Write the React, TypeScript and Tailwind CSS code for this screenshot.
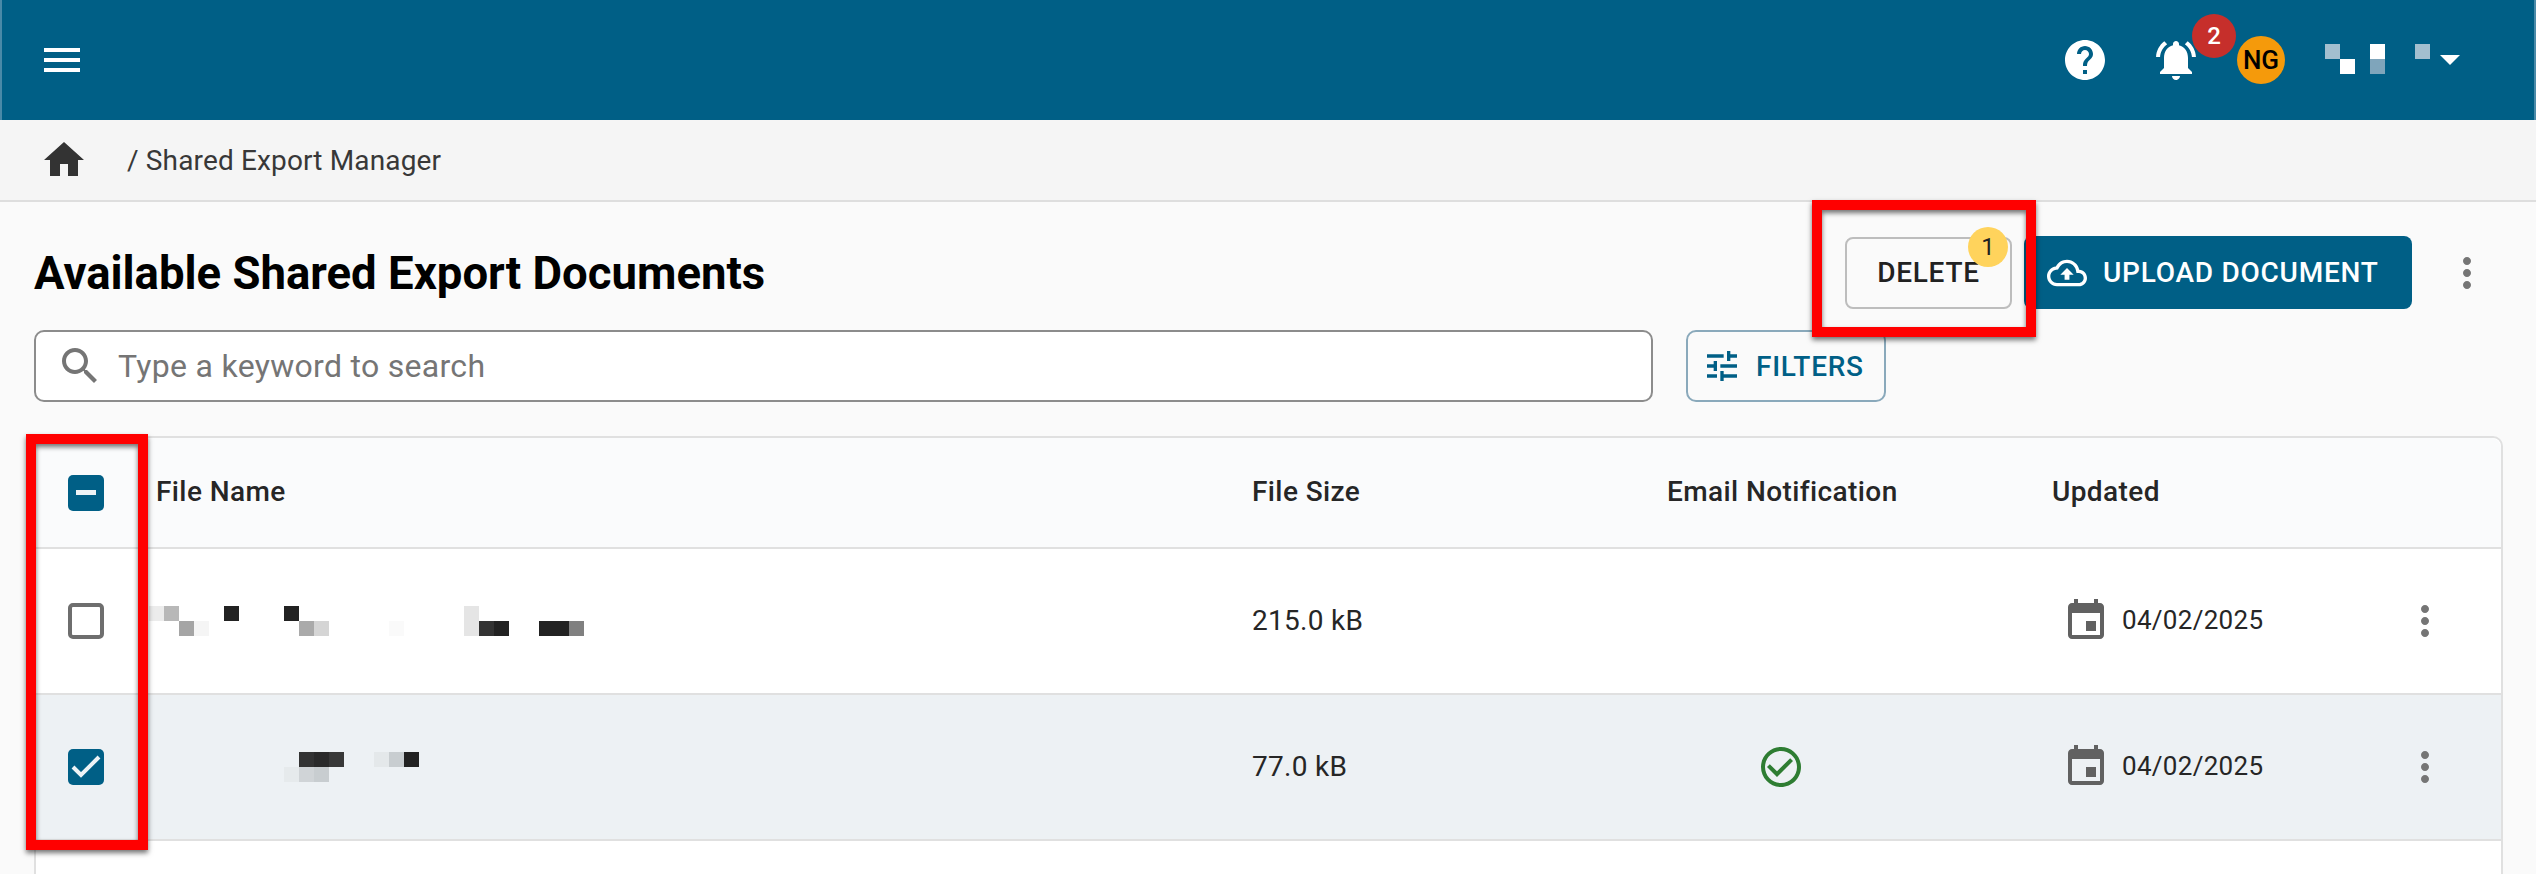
const FONT = "font-['Roboto',sans-serif]"

const MaterialIcon = ({ d, className }: { d: string; className?: string }) => (
  <svg viewBox="0 0 24 24" fill="currentColor" className={className}>
    <path d={d} />
  </svg>
)

const MENU = 'M3 18h18v-2H3v2zm0-5h18v-2H3v2zm0-7v2h18V6H3z'
const HOME = 'M10 20v-6h4v6h5v-8h3L12 3 2 12h3v8z'
const HELP = 'M12 2C6.48 2 2 6.48 2 12s4.48 10 10 10 10-4.48 10-10S17.52 2 12 2zm1 17h-2v-2h2v2zm2.07-7.75-.9.92C13.45 12.9 13 13.5 13 15h-2v-.5c0-1.1.45-2.1 1.17-2.83l1.24-1.26c.37-.36.59-.86.59-1.41 0-1.1-.9-2-2-2s-2 .9-2 2H8c0-2.21 1.79-4 4-4s4 1.79 4 4c0 .88-.36 1.68-.93 2.25z'
const BELL = 'M7.58 4.08 6.15 2.65C3.75 4.48 2.17 7.3 2.03 10.5h2c.15-2.65 1.51-4.97 3.55-6.42zm12.39 6.42h2c-.15-3.2-1.73-6.02-4.12-7.85l-1.42 1.43c2.02 1.45 3.39 3.77 3.54 6.42zM18 11c0-3.07-1.64-5.64-4.5-6.32V4c0-.83-.67-1.5-1.5-1.5s-1.5.67-1.5 1.5v.68C7.63 5.36 6 7.92 6 11v5l-2 2v1h16v-1l-2-2v-5zm-6 11c.14 0 .27-.01.4-.04.65-.14 1.18-.58 1.44-1.18.1-.24.15-.5.15-.78h-4c.01 1.1.9 2 2.01 2z'
const KEBAB = 'M12 8c1.1 0 2-.9 2-2s-.9-2-2-2-2 .9-2 2 .9 2 2 2zm0 2c-1.1 0-2 .9-2 2s.9 2 2 2 2-.9 2-2-.9-2-2-2zm0 6c-1.1 0-2 .9-2 2s.9 2 2 2 2-.9 2-2-.9-2-2-2z'
const CLOUD = 'M19.35 10.04C18.67 6.59 15.64 4 12 4 9.11 4 6.6 5.64 5.35 8.04 2.34 8.36 0 10.91 0 14c0 3.31 2.69 6 6 6h13c2.76 0 5-2.24 5-5 0-2.64-2.05-4.78-4.65-4.96zM19 18H6c-2.21 0-4-1.79-4-4 0-2.05 1.53-3.76 3.56-3.97l1.07-.11.5-.95C8.08 7.14 9.94 6 12 6c2.62 0 4.88 1.86 5.39 4.43l.3 1.5 1.53.11c1.56.1 2.78 1.41 2.78 2.96 0 1.65-1.35 3-3 3zM8 13h2.55v3h2.9v-3H16l-4-4z'
const SEARCH = 'M15.5 14h-.79l-.28-.27C15.41 12.59 16 11.11 16 9.5 16 5.91 13.09 3 9.5 3S3 5.91 3 9.5 5.91 16 9.5 16c1.61 0 3.09-.59 4.23-1.57l.27.28v.79l5 4.99L20.49 19l-4.99-5zm-6 0C7.01 14 5 11.99 5 9.5S7.01 5 9.5 5 14 7.01 14 9.5 11.99 14 9.5 14z'
const TUNE = 'M3 17v2h6v-2H3zM3 5v2h10V5H3zm10 16v-2h8v-2h-8v-2h-2v6h2zM7 9v2H3v2h4v2h2V9H7zm14 4v-2H11v2h10zm-6-4h2V7h4V5h-4V3h-2v6z'
const EVENT = 'M17 12h-5v5h5v-5zM16 1v2H8V1H6v2H5c-1.11 0-1.99.9-1.99 2L3 19c0 1.1.89 2 2 2h14c1.1 0 2-.9 2-2V5c0-1.1-.9-2-2-2h-1V1h-2zm3 18H5V8h14v11z'
const CHECK_CIRCLE = 'M16.59 7.58 10 14.17l-3.59-3.58L5 12l5 5 8-8zM12 2C6.48 2 2 6.48 2 12s4.48 10 10 10 10-4.48 10-10S17.52 2 12 2zm0 18c-4.42 0-8-3.58-8-8s3.58-8 8-8 8 3.58 8 8-3.58 8-8 8z'

type Cell = [number, number, string]

// redacted text in the screenshot: 15px mosaic blocks
const Mosaic = ({ cells, cols }: { cells: Cell[]; cols: number }) => (
  <svg width={cols * 15} height={30} className="block">
    {cells.map(([col, row, fill]) => (
      <rect key={`${col}-${row}`} x={col * 15} y={row * 15} width={15} height={15} fill={fill} />
    ))}
  </svg>
)

const ROW_ONE: Cell[] = [
  [0, 0, '#ececec'], [1, 0, '#b8b8b8'], [5, 0, '#222222'], [9, 0, '#222222'], [21, 0, '#e5e5e5'],
  [2, 1, '#a5a5a5'], [3, 1, '#f5f5f5'], [10, 1, '#aaaaaa'], [11, 1, '#d5d5d5'], [16, 1, '#fafafa'],
  [21, 1, '#e5e5e5'], [22, 1, '#333333'], [23, 1, '#222222'], [26, 1, '#222222'], [27, 1, '#222222'], [28, 1, '#808080'],
]

const ROW_TWO: Cell[] = [
  [10, 0, '#333333'], [11, 0, '#2a2a2a'], [12, 0, '#383838'], [15, 0, '#e4e8ea'], [16, 0, '#c8cdd0'], [17, 0, '#222222'],
  [9, 1, '#e6eaec'], [10, 1, '#d0d4d7'], [11, 1, '#c8cdd0'],
]

const USER_NAME: Cell[] = [
  [0, 0, '#a3bfcf'], [3, 0, '#ffffff'], [6, 0, '#a3bfcf'],
  [1, 1, '#ffffff'], [3, 1, '#7fa5bb'],
]

const Checkbox = ({ state }: { state: 'none' | 'some' | 'all' }) => {
  if (state === 'none') {
    return <div className="h-9 w-9 rounded-[5px] border-[4px] border-[#6e6e6e] bg-white" />
  }
  return (
    <svg width={36} height={36} className="block">
      <rect width={36} height={36} rx={5} fill="#005f86" />
      {state === 'some' && <rect x={8} y={15} width={20} height={5} fill="#edf3f6" />}
      {state === 'all' && <path d="M5 18l8 8L31 8" fill="none" stroke="#edf3f6" strokeWidth={4} />}
    </svg>
  )
}

const Row = ({ state, size, cells, notified, className }: {
  state: 'none' | 'all'
  size: string
  cells: Cell[]
  notified?: boolean
  className: string
}) => (
  <div className={`grid h-[146px] grid-cols-[113px_1103px_415px_227px_158px_1fr] items-center border-b-2 border-[#e0e0e0] text-[28px] tracking-[0.3px] text-[#262626] ${className}`}>
    <div className="pl-[32px]"><Checkbox state={state} /></div>
    <Mosaic cells={cells} cols={29} />
    <div>{size}</div>
    <div className="flex justify-center">
      {notified && <MaterialIcon d={CHECK_CIRCLE} className="h-12 w-12 text-[#2e7d32]" />}
    </div>
    <div />
    <div className="flex items-center justify-between pr-[52px]">
      <div className="flex items-center gap-3">
        <MaterialIcon d={EVENT} className="ml-[10px] h-12 w-12 text-[#616161]" />
        <span className="mt-[-2px] text-[26px]">04/02/2025</span>
      </div>
      <MaterialIcon d={KEBAB} className="h-12 w-12 text-[#757575]" />
    </div>
  </div>
)

export default function App() {
  return (
    <div className={`${FONT} relative h-[874px] overflow-hidden bg-[#fafafa]`}>
      <header className="flex h-[120px] items-center justify-between border-x-2 border-[#4a8aa8] bg-[#005f86] pr-[74px] pl-[36px] text-white">
        <MaterialIcon d={MENU} className="h-12 w-12" />
        <div className="flex items-center">
          <MaterialIcon d={HELP} className="h-12 w-12" />
          <div className="relative ml-[43px]">
            <MaterialIcon d={BELL} className="h-12 w-12" />
            <span className="absolute top-[-22px] left-[40px] flex h-11 w-11 items-center justify-center rounded-full bg-[#c62f2b] text-[24px] font-medium">2</span>
          </div>
          <span className="ml-[37px] flex h-12 w-12 items-center justify-center rounded-full bg-[#f59a0b] text-[26px] font-medium text-black">NG</span>
          <div className="mt-[-2px] ml-[40px]"><Mosaic cells={USER_NAME} cols={7} /></div>
          <svg width={20} height={10} className="ml-[10px] block fill-white"><path d="M0 0h20L10 10z" /></svg>
        </div>
      </header>

      <nav className="flex h-[82px] items-center border-b-2 border-[#dedede] bg-[#f5f5f5] pl-[40px] text-[28px] tracking-[0.15px] text-[#383838]">
        <MaterialIcon d={HOME} className="h-12 w-12 text-[#333333]" />
        <span className="mt-[1px] ml-[39px]">/ Shared Export Manager</span>
      </nav>

      <main className="pt-[34px] pr-[35px] pl-[34px]">
        <div className="flex h-[73px] items-center justify-between">
          <h1 className="mt-[3px] text-[45.5px] font-bold text-black">Available Shared Export Documents</h1>
          <div className="flex items-center pr-[10px]">
            <button className="relative h-[72px] w-[167px] rounded-lg border-2 border-[#bdbdbd] text-[28px] font-medium tracking-[0.75px] text-[#212121]">
              DELETE
              <span className="absolute top-[-12px] right-[2px] flex h-10 w-10 items-center justify-center rounded-full bg-[#ffd35c] text-[24px] font-normal tracking-normal">1</span>
            </button>
            <button className="ml-3 flex h-[73px] w-[388px] items-center rounded-lg bg-[#005f86] pl-[23px] text-[28px] font-medium tracking-[0.75px] text-white">
              <MaterialIcon d={CLOUD} className="h-10 w-10" />
              <span className="ml-4">UPLOAD DOCUMENT</span>
            </button>
            <MaterialIcon d={KEBAB} className="ml-[31px] h-12 w-12 text-[#757575]" />
          </div>
        </div>

        <div className="mt-[21px] flex items-center">
          <div className="flex h-[72px] w-[1619px] items-center rounded-[10px] border-2 border-[#8c8c8c] bg-white pl-[20px] text-[32px] tracking-[0.3px] text-[#757575]">
            <MaterialIcon d={SEARCH} className="h-12 w-12" />
            <span className="ml-[14px]">Type a keyword to search</span>
          </div>
          <button className="ml-[33px] flex h-[72px] w-[200px] items-center rounded-[10px] border-2 border-[#8aa9bb] pl-[14px] text-[28px] font-medium tracking-[0.75px] text-[#005f86]">
            <MaterialIcon d={TUNE} className="h-10 w-10" />
            <span className="mt-[2px] ml-[14px]">FILTERS</span>
          </button>
        </div>

        <div className="mt-[34px] h-[500px] w-[2469px] rounded-t-[10px] border-2 border-[#e0e0e0] bg-white">
          <div className="grid h-[111px] grid-cols-[113px_1103px_415px_385px_1fr] items-center rounded-t-[10px] border-b-2 border-[#e0e0e0] bg-[#fafbfc] pb-[2px] text-[28px] font-medium tracking-[0.4px] text-[#262626]">
            <div className="pt-[2px] pl-[32px]"><Checkbox state="some" /></div>
            <div className="pl-[7px]">File Name</div>
            <div>File Size</div>
            <div>Email Notification</div>
            <div>Updated</div>
          </div>
          <Row state="none" size="215.0 kB" cells={ROW_ONE} className="bg-white" />
          <Row state="all" size="77.0 kB" cells={ROW_TWO} notified className="bg-[#edf1f4]" />
        </div>
      </main>

      {/* red annotation boxes from the screenshot */}
      <div className="absolute top-[200px] left-[1812px] h-[137px] w-[224px] border-[10px] border-[#ff0000] shadow-[0_3px_5px_rgba(0,0,0,0.55),inset_0_3px_5px_rgba(0,0,0,0.55)]" />
      <div className="absolute top-[434px] left-[26px] h-[416px] w-[122px] border-[10px] border-[#ff0000] shadow-[0_3px_5px_rgba(0,0,0,0.55),inset_0_3px_5px_rgba(0,0,0,0.55)]" />
    </div>
  )
}
